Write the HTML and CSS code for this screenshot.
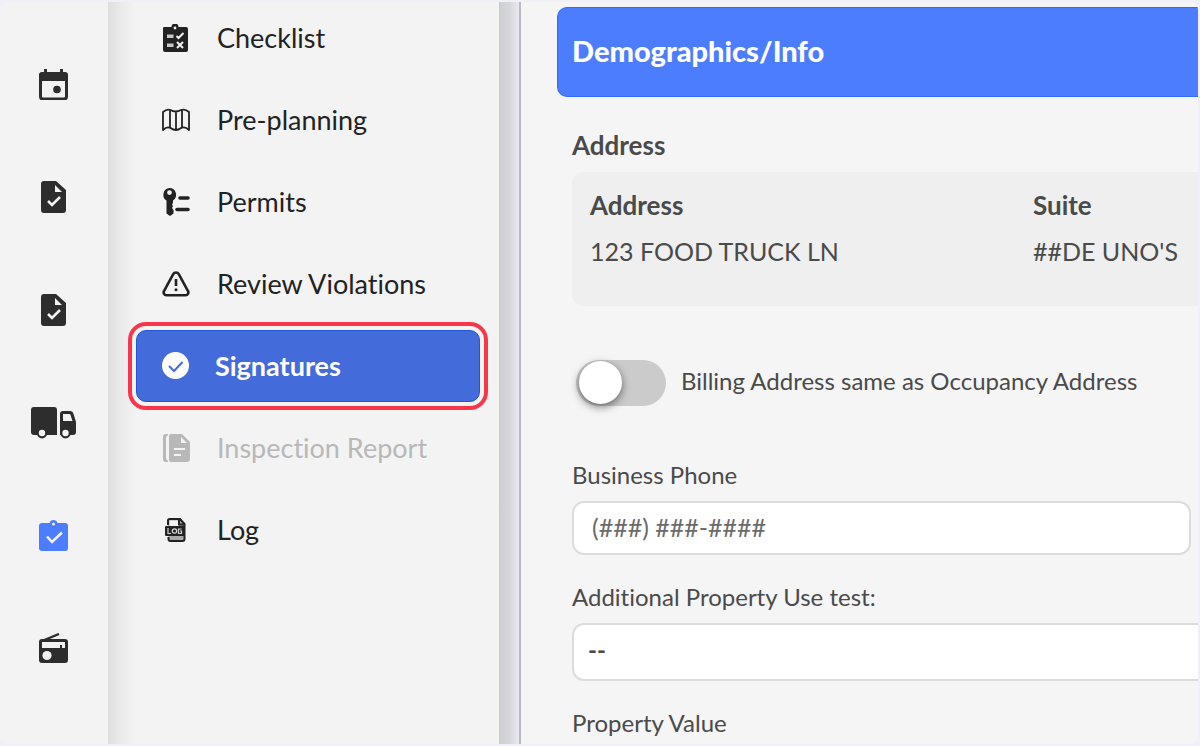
FILE: index.html
```html
<!DOCTYPE html>
<html lang="en">
<head>
<meta charset="utf-8">
<title>Inspection – Signatures</title>
<link rel="stylesheet" href="styles.css">
</head>
<body>
<div class="app">
  <nav class="rail" aria-label="Main">
    <a class="rail-link" href="#" aria-label="Calendar">
      <svg width="32" height="32" viewBox="0 0 32 32"><rect x="2.500" y="6" width="26" height="25" rx="2.500" fill="none" stroke="currentColor" stroke-width="3"/><path d="M1 13V7a3 3 0 0 1 3-3h23a3 3 0 0 1 3 3v6zM6 1h3v4H6zM22 1h3v4h-3z" fill="currentColor"/><circle cx="19" cy="21.500" r="3.800" fill="currentColor"/></svg>
    </a>
    <a class="rail-link" href="#" aria-label="Inspections">
      <svg width="32" height="32" viewBox="0 0 32 32"><path fill="currentColor" fill-rule="evenodd" d="M6 0h12l10 9v20a3 3 0 0 1-3 3H6a3 3 0 0 1-3-3V3a3 3 0 0 1 3-3zM17 4v7h7z"/><path d="m10 20 4 4 8-8" fill="none" stroke="#f3f3f3" stroke-width="2.600"/></svg>
    </a>
    <a class="rail-link" href="#" aria-label="Reports">
      <svg width="32" height="32" viewBox="0 0 32 32"><path fill="currentColor" fill-rule="evenodd" d="M6 0h12l10 9v20a3 3 0 0 1-3 3H6a3 3 0 0 1-3-3V3a3 3 0 0 1 3-3zM17 4v7h7z"/><path d="m10 20 4 4 8-8" fill="none" stroke="#f3f3f3" stroke-width="2.600"/></svg>
    </a>
    <a class="rail-link" href="#" aria-label="Vehicles">
      <svg width="46" height="32" viewBox="0 0 46 32"><path fill="currentColor" d="M3 0h20a3 3 0 0 1 3 3v25H3a3 3 0 0 1-3-3V3a3 3 0 0 1 3-3zM29 28V7a3 3 0 0 1 3-3h7c2 0 3 1 3.500 3L45 15v10a3 3 0 0 1-3 3z"/><path fill="#f3f3f3" d="M32 7h6.500a1 1 0 0 1 1 1l2 6H32z"/><circle cx="11" cy="26.500" r="5" fill="currentColor"/><circle cx="34.500" cy="26.500" r="5" fill="currentColor"/><circle cx="11" cy="26" r="3.200" fill="#f3f3f3"/><circle cx="34.500" cy="26" r="3.200" fill="#f3f3f3"/></svg>
    </a>
    <a class="rail-link rail-link-active" href="#" aria-label="Tasks">
      <svg width="32" height="32" viewBox="0 0 32 32"><path fill="currentColor" fill-rule="evenodd" d="M4 3h7.500a4.200 4.200 0 0 1 8 0H27a3 3 0 0 1 3 3v22a3 3 0 0 1-3 3H4a3 3 0 0 1-3-3V6a3 3 0 0 1 3-3zm11.500-.5a1.500 1.500 0 1 0 0 3 1.500 1.500 0 0 0 0-3z"/><path d="m9 16.500 5 5.500 10-9.500" fill="none" stroke="#f3f3f3" stroke-width="2.600"/></svg>
    </a>
    <a class="rail-link" href="#" aria-label="Radio">
      <svg width="32" height="32" viewBox="0 0 32 32"><path d="M4 8 21 1" stroke="currentColor" stroke-width="2.400"/><path fill="currentColor" d="M4 6h23a3 3 0 0 1 3 3v18a3 3 0 0 1-3 3H4a3 3 0 0 1-3-3V9a3 3 0 0 1 3-3z"/><path fill="#f3f3f3" d="M4 9h23v6h-3v-3h-2v3H4z"/><circle cx="9" cy="22.500" r="4.600" fill="#f3f3f3"/></svg>
    </a>
  </nav>

  <nav class="menu" aria-label="Inspection sections">
    <a class="menu-item" href="#">
      <svg class="menu-icon" viewBox="0 0 28 28"><path fill="currentColor" d="M2 3h7.500a3.500 3.500 0 0 1 7 0H24a2 2 0 0 1 2 2v21a2 2 0 0 1-2 2H3a2 2 0 0 1-2-2V4a1 1 0 0 1 1-1z"/><circle cx="13" cy="4" r="1.400" fill="#f3f3f3"/><path d="M5 10.500h6.500v3.500H5zM5 19.500h6.500V23H5z" fill="#c8c8c8"/><path d="m14.500 12 2 2 5-5M15 18l6 6m0-6-6 6" fill="none" stroke="#f3f3f3" stroke-width="2"/></svg>
      <span>Checklist</span>
    </a>
    <a class="menu-item" href="#">
      <svg class="menu-icon" viewBox="0 0 28 28"><path d="M1 6q4-3.500 7.500-2 5 3 10.500 0 4-1.500 8 2v18q-4-4-8-2-5 4-10.500 0-3.500-2-7.500 2zM8 4v18M14 6v18M20 4v18" fill="none" stroke="currentColor" stroke-width="1.800" stroke-linejoin="round"/></svg>
      <span>Pre-planning</span>
    </a>
    <a class="menu-item" href="#">
      <svg class="menu-icon" viewBox="0 0 28 28"><path fill="currentColor" fill-rule="evenodd" d="M7.500 0a6.800 6.800 0 0 1 3.500 12.500v2.500l-1 1.500 1 1.500-1 2 1.500 2v3.500L8 28l-3.500-2.500v-13A6.800 6.800 0 0 1 7.500 0zm0 2.200a2.400 2.400 0 1 0 0 4.800 2.400 2.400 0 0 0 0-4.800z"/><path d="M18 10h8M15 21.500h11" stroke="currentColor" stroke-width="3.600" stroke-linecap="round"/></svg>
      <span>Permits</span>
    </a>
    <a class="menu-item" href="#">
      <svg class="menu-icon" viewBox="0 0 28 28"><path d="M11.200 4.200 2 21a2.800 2.800 0 0 0 2.400 4.200h19.200A2.800 2.800 0 0 0 26 21L16.800 4.200a3.200 3.200 0 0 0-5.600 0z" fill="none" stroke="currentColor" stroke-width="2.600"/><path d="M14 9v7" stroke="currentColor" stroke-width="2.600"/><circle cx="14" cy="19.800" r="1.500" fill="currentColor"/></svg>
      <span>Review Violations</span>
    </a>
    <a class="menu-item menu-item-active" href="#" aria-current="page">
      <svg class="menu-icon" viewBox="0 0 28 28"><circle cx="13.500" cy="13.500" r="13.500" fill="currentColor"/><path d="m7 14 5 5 8.500-9" fill="none" stroke="#436bd9" stroke-width="2"/></svg>
      <span>Signatures</span>
    </a>
    <a class="menu-item menu-item-disabled" href="#" aria-disabled="true">
      <svg class="menu-icon" viewBox="0 0 28 28"><path fill="currentColor" fill-rule="evenodd" d="M9 0h11l8 8v17a3 3 0 0 1-3 3H9a2 2 0 0 1-2-2V2a2 2 0 0 1 2-2zm10 3v6h6zM12 14h11v2H12zM12 20h7v2h-7z"/><path fill="currentColor" d="M4 0h2v1L4 3v22l2 2v1H4a3 3 0 0 1-3-3V3a3 3 0 0 1 3-3z"/></svg>
      <span>Inspection Report</span>
    </a>
    <a class="menu-item" href="#">
      <svg class="menu-icon" viewBox="0 0 28 28"><path d="M6 9V4.500A1.500 1.500 0 0 1 7.500 3H18l4.500 5v15a2 2 0 0 1-2 2h-12a2 2 0 0 1-2-2v-2" fill="#aaa" stroke="currentColor" stroke-width="2"/><path d="M7.500 4.500H17V10H7.500z" fill="#f3f3f3"/><path d="M17 3v5.500h5" fill="none" stroke="currentColor" stroke-width="2"/><rect x="3" y="10" width="20" height="10" rx="1" fill="currentColor"/><path d="M6 12v5.500h3M19.500 13h-3v4.500h3V15H18" fill="none" stroke="#d5d5d5" stroke-width="1.200"/><circle cx="12.500" cy="15" r="2.200" fill="none" stroke="#d5d5d5" stroke-width="1.200"/></svg>
      <span>Log</span>
    </a>
  </nav>

  <div class="divider"></div>

  <main class="content">
    <h1 class="panel-title">Demographics/Info</h1>
    <form class="panel-body">
      <h2 class="section-title">Address</h2>
      <dl class="address-card">
        <div class="address-cell"><dt>Address</dt><dd>123 FOOD TRUCK LN</dd></div>
        <div class="address-cell"><dt>Suite</dt><dd>##DE UNO'S</dd></div>
      </dl>
      <div class="toggle-row">
        <input class="toggle" type="checkbox" role="switch" id="billing">
        <label class="toggle-label" for="billing">Billing Address same as Occupancy Address</label>
      </div>
      <div class="field">
        <label for="phone">Business Phone</label>
        <input class="control" id="phone" type="tel" placeholder="(###) ###-####">
      </div>
      <div class="field">
        <label for="use">Additional Property Use test:</label>
        <select class="control control-select" id="use"><option>--</option></select>
      </div>
      <div class="field">
        <label for="value">Property Value</label>
        <input class="control" id="value" type="text">
      </div>
    </form>
  </main>
</div>
</body>
</html>
```
FILE: styles.css
```css
* {
  box-sizing: border-box;
}

body {
  margin: 0;
  background: #f1f0f8;
  font-family: Lato, "Liberation Sans", sans-serif;
  font-size: 24px;
  font-variant-ligatures: none;
  line-height: 30px;
  color: #4a4a4a;
}

.app {
  display: flex;
  height: calc(100vh - 4px);
  margin: 2px 2px 2px 0;
  border-radius: 8px;
  background: #f3f3f3;
  overflow: hidden;
}

.rail {
  flex: 0 0 108px;
  display: flex;
  flex-direction: column;
  padding-top: 25px;
}

.rail-link {
  flex: 0 0 113px;
  display: flex;
  align-items: center;
  justify-content: center;
  color: #2d2d2d;
}

.rail-link-active {
  color: #4d7dff;
}

.menu {
  flex: 0 0 391px;
  display: flex;
  flex-direction: column;
  gap: 10px;
  padding: 0 19px 0 28px;
  background: linear-gradient(to right, #dedede, #e8e8e8 10px, #f3f3f3 28px);
}

.menu-item {
  display: flex;
  align-items: center;
  gap: 27px;
  height: 72px;
  padding: 0 26px;
  border-radius: 10px;
  font-size: 27px;
  color: #222;
  text-decoration: none;
  white-space: nowrap;
}

.menu-icon {
  flex: none;
  width: 28px;
  height: 28px;
}

.menu-item-active {
  gap: 25px;
  background: #436bd9;
  border: 1px solid #1f56d8;
  padding: 0 25px;
  color: #fff;
  font-weight: 700;
  outline: 4px solid #f93549;
  outline-offset: 4px;
}

.menu-item-disabled {
  color: #b8b8b8;
}

.divider {
  flex: 0 0 22px;
  background: linear-gradient(to right, #c6c8cc, #cfd1d5 2px, #d4d6da 10px, #e6e8ee 19px);
  border-right: 2px solid #b9babd;
}

.content {
  flex: 1;
  min-width: 0;
  padding: 5px 0 0 36px;
  background: #f5f5f5;
  overflow: hidden;
}

.panel-title {
  margin: 0;
  padding: 28px 14px 30px;
  border: 1px solid #2f6bff;
  border-right: 0;
  border-radius: 10px 0 0 10px;
  background: #4d7dff;
  color: #fff;
  font-size: 29px;
  font-weight: 900;
  line-height: 30px;
}

.panel-body {
  padding: 33px 0 0 15px;
}

.section-title {
  margin: 0 0 12px;
  font-size: 26px;
  font-weight: 700;
  line-height: 30px;
}

.address-card {
  display: grid;
  grid-template-columns: 443px 1fr;
  margin: 0 0 54px;
  padding: 18px 0 40px 18px;
  border-radius: 12px 0 0 12px;
  background: #efefef;
  font-size: 25px;
  white-space: nowrap;
}

.address-cell {
  display: grid;
  gap: 16px;
}

.address-cell dt {
  font-size: 26px;
  font-weight: 700;
}

.address-cell dd {
  margin: 0;
}

.toggle-row {
  display: flex;
  align-items: center;
  gap: 15px;
  margin: 0 0 54px 4px;
}

.toggle {
  appearance: none;
  width: 90px;
  height: 46px;
  margin: 0;
  padding: 1px 3px;
  border-radius: 23px;
  background: #cbcbcb;
}

.toggle::before {
  content: "";
  display: block;
  width: 43px;
  height: 43px;
  border-radius: 50%;
  background: #fff;
  box-shadow: 0 3px 8px rgba(0, 0, 0, 0.5);
}

.toggle:checked::before {
  margin-left: auto;
}

.toggle-label {
  padding-bottom: 4px;
}

.field {
  display: grid;
  gap: 11px;
  margin-bottom: 27px;
}

.control {
  width: calc(100% - 7px);
  height: 54px;
  margin: 0;
  padding: 0 18px 2px;
  border: 2px solid #dcdcdc;
  border-radius: 12px;
  background: #fff;
  color: #4a4a4a;
  font: inherit;
  font-size: 25px;
}

.control::placeholder {
  color: #6b6b6b;
  opacity: 1;
}

.control-select {
  appearance: none;
  width: 100%;
  height: 58px;
  padding: 0 14px 4px;
  border-right: 0;
  border-radius: 12px 0 0 12px;
  font-size: 24px;
  font-weight: 700;
}
```
